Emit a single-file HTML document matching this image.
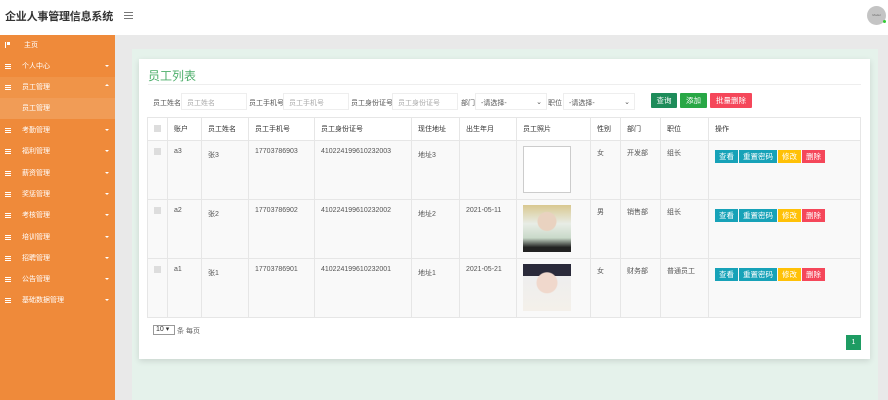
<!DOCTYPE html>
<html><head><meta charset="utf-8"><style>
*{margin:0;padding:0;box-sizing:border-box}
body{width:888px;height:400px;overflow:hidden;background:#e9e9e9;font-family:"Liberation Sans","Noto Sans CJK SC",sans-serif;font-size:7px;color:#555;position:relative}
.hdr{position:absolute;left:0;top:0;width:888px;height:35px;background:#fff}
.logo{position:absolute;left:5px;top:8px;font-size:11px;font-weight:bold;color:#333;letter-spacing:-0.2px}
.burger{position:absolute;left:124px;top:12px;width:9px}
.burger i{display:block;height:1px;background:#777;margin-bottom:2px}
.av{position:absolute;left:867px;top:6px;width:19px;height:19px;border-radius:50%;background:#c4c4c4;font-size:3px;color:#666;text-align:center;line-height:19px}
.av b{position:absolute;right:0;bottom:2px;width:3px;height:3px;background:#3c3;border-radius:50%}
.side{position:absolute;left:0;top:35px;width:115px;height:365px;background:#ef8a3a}
.it{position:absolute;left:0;width:115px;height:21px;color:#fff;font-size:7px;line-height:21px}
.it .ic{position:absolute;left:5px;top:8px;width:6px;height:5px;border-top:1px solid #fff;border-bottom:1px solid #fff}
.it .ic:after{content:"";position:absolute;left:0;top:1px;width:6px;height:1px;background:#fff}
.it span{position:absolute;left:22px}
.it em{position:absolute;left:105px;top:9px;border:2px solid transparent;border-top:2px solid #fff}
.green{position:absolute;left:132px;top:49px;width:746px;height:351px;background:#e5f2eb}
.card{position:absolute;left:139px;top:59px;width:731px;height:300px;background:#fff;box-shadow:0 2px 6px rgba(0,0,0,.12)}
.ttl{position:absolute;left:9px;top:8px;font-size:12px;color:#4cae6a}
.line{position:absolute;left:9px;right:9px;top:25px;height:1px;background:#eee}
.lab{position:absolute;top:39px;font-size:7px;color:#555}
.inp{position:absolute;top:34px;height:17px;border:1px solid #eee;font-size:7px;color:#aaa;padding:4px 5px}
.btn{position:absolute;top:34px;height:15px;color:#fff;font-size:7.5px;line-height:15px;text-align:center;border-radius:1px}
table{position:absolute;left:8px;top:58px;border-collapse:collapse;width:714px}
td,th{border:1px solid #e6e6e6;font-size:7px;text-align:left;vertical-align:top;padding:0 6px;color:#555;font-weight:normal}
th{height:23px;vertical-align:middle;color:#333}
tr.r td{height:59px;padding-top:7px;background:#f9f9f9}
.cb{display:inline-block;width:7px;height:7px;background:#ddd}
.b{display:inline-block;height:13px;line-height:13px;color:#fff;padding:0 4px;font-size:7.5px;margin-top:2px;margin-right:1px}
.ph{width:48px;height:47px}
</style></head><body>
<div class="hdr"><div class="logo">企业人事管理信息系统</div><div class="burger"><i></i><i></i><i></i></div><div class="av">Model<b></b></div></div>
<div class="side">
<div class="it" style="top:0"><span style="left:24px">主页</span><div style="position:absolute;left:5px;top:7px;width:5px;height:6px;border-left:1px solid #fff;background:linear-gradient(#fff,#fff) 1px 0/4px 3px no-repeat"></div></div>
<div class="it" style="top:21px"><div class="ic"></div><span>个人中心</span><em></em></div>
<div class="it" style="top:42px;background:#f09448"><div class="ic"></div><span>员工管理</span><em style="border-top:0;border-bottom:2px solid #fff;top:7px"></em></div>
<div class="it" style="top:63px;background:#f19c56"><span>员工管理</span></div>
<div class="it" style="top:85px"><div class="ic"></div><span>考勤管理</span><em></em></div>
<div class="it" style="top:106px"><div class="ic"></div><span>福利管理</span><em></em></div>
<div class="it" style="top:128px"><div class="ic"></div><span>薪资管理</span><em></em></div>
<div class="it" style="top:149px"><div class="ic"></div><span>奖惩管理</span><em></em></div>
<div class="it" style="top:170px"><div class="ic"></div><span>考核管理</span><em></em></div>
<div class="it" style="top:192px"><div class="ic"></div><span>培训管理</span><em></em></div>
<div class="it" style="top:213px"><div class="ic"></div><span>招聘管理</span><em></em></div>
<div class="it" style="top:234px"><div class="ic"></div><span>公告管理</span><em></em></div>
<div class="it" style="top:255px"><div class="ic"></div><span>基础数据管理</span><em></em></div>
</div>
<div class="green"></div>
<div class="card">
<div class="ttl">员工列表</div><div class="line"></div>
<div class="lab" style="left:14px">员工姓名</div><div class="inp" style="left:42px;width:66px">员工姓名</div>
<div class="lab" style="left:110px">员工手机号</div><div class="inp" style="left:144px;width:66px">员工手机号</div>
<div class="lab" style="left:212px">员工身份证号</div><div class="inp" style="left:253px;width:66px">员工身份证号</div>
<div class="lab" style="left:322px">部门</div><div class="inp" style="left:336px;width:72px;color:#555">-请选择-<span style="position:absolute;right:4px">⌄</span></div>
<div class="lab" style="left:409px">职位</div><div class="inp" style="left:424px;width:72px;color:#555">-请选择-<span style="position:absolute;right:4px">⌄</span></div>
<div class="btn" style="left:512px;width:26px;background:#1e8c5a">查询</div>
<div class="btn" style="left:541px;width:27px;background:#28a745">添加</div>
<div class="btn" style="left:571px;width:42px;background:#f5475a">批量删除</div>
<table>
<tr><th style="width:20px"><span class="cb"></span></th><th style="width:34px">账户</th><th style="width:47px">员工姓名</th><th style="width:66px">员工手机号</th><th style="width:97px">员工身份证号</th><th style="width:48px">现住地址</th><th style="width:57px">出生年月</th><th style="width:74px">员工照片</th><th style="width:30px">性别</th><th style="width:40px">部门</th><th style="width:48px">职位</th><th>操作</th></tr>
<tr class="r"><td><span class="cb"></span></td><td>a3</td><td style="padding-top:9px">张3</td><td>17703786903</td><td>410224199610232003</td><td style="padding-top:9px">地址3</td><td></td><td style="padding-top:5px"><div class="ph" style="border:1px solid #ccc;background:#fff"></div></td><td>女</td><td>开发部</td><td>组长</td><td><span class="b" style="background:#17a2b8">查看</span><span class="b" style="background:#17a2b8">重置密码</span><span class="b" style="background:#ffc107">修改</span><span class="b" style="background:#f5475a">删除</span></td></tr>
<tr class="r"><td><span class="cb"></span></td><td>a2</td><td style="padding-top:9px">张2</td><td>17703786902</td><td>410224199610232002</td><td style="padding-top:9px">地址2</td><td>2021-05-11</td><td style="padding-top:0"><div class="ph" style="margin-top:5px;background:radial-gradient(circle at 50% 35%,#e9d2c0 0 9px,transparent 10px),linear-gradient(#d9c890,#e8ede6 40%,#c9d9c9 70%,#222 90%)"></div></td><td>男</td><td>销售部</td><td>组长</td><td><span class="b" style="background:#17a2b8">查看</span><span class="b" style="background:#17a2b8">重置密码</span><span class="b" style="background:#ffc107">修改</span><span class="b" style="background:#f5475a">删除</span></td></tr>
<tr class="r"><td><span class="cb"></span></td><td>a1</td><td style="padding-top:9px">张1</td><td>17703786901</td><td>410224199610232001</td><td style="padding-top:9px">地址1</td><td>2021-05-21</td><td style="padding-top:0"><div class="ph" style="margin-top:5px;background:radial-gradient(circle at 50% 40%,#f0d8cc 0 10px,transparent 11px),linear-gradient(#2a2a3a 25%,#eee 26%,#f4f0ea)"></div></td><td>女</td><td>财务部</td><td>普通员工</td><td><span class="b" style="background:#17a2b8">查看</span><span class="b" style="background:#17a2b8">重置密码</span><span class="b" style="background:#ffc107">修改</span><span class="b" style="background:#f5475a">删除</span></td></tr>
</table>
<div style="position:absolute;left:14px;top:266px;width:22px;height:10px;border:1px solid #999;font-size:7px;line-height:8px;padding-left:2px;color:#333">10 ▾</div>
<div style="position:absolute;left:38px;top:267px;font-size:7px;color:#666">条 每页</div>
<div style="position:absolute;left:707px;top:276px;width:15px;height:15px;background:#1e9c63;color:#fff;font-size:7px;text-align:center;line-height:15px">1</div>
</div>
</body></html>
